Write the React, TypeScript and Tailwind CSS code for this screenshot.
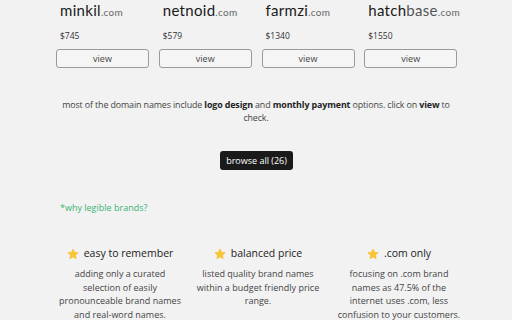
import React from "react";

const domains = [
  { name: "minkil", price: "$745" },
  { name: "netnoid", price: "$579" },
  { name: "farmzi", price: "$1340" },
  { name: "hatch", extra: "base", price: "$1550" },
];

const Star = () => (
  <svg width="12" height="12" viewBox="0 0 24 24" className="shrink-0">
    <path
      d="M12 1.8l3.1 6.6 7.2.9-5.3 5 1.4 7.1L12 17.9l-6.4 3.5 1.4-7.1-5.3-5 7.2-.9z"
      fill="#f8c630"
      stroke="#f2b61c"
      strokeWidth="1"
      strokeLinejoin="round"
    />
  </svg>
);

const features = [
  {
    title: "easy to remember",
    lines: ["adding only a curated", "selection of easily", "pronounceable brand names", "and real-word names."],
  },
  {
    title: "balanced price",
    lines: ["listed quality brand names", "within a budget friendly price", "range."],
  },
  {
    title: ".com only",
    lines: ["focusing on .com brand", "names as 47.5% of the", "internet uses .com, less", "confusion to your customers."],
  },
];

export default function App() {
  return (
    <div
      className="w-[512px] h-[320px] overflow-hidden bg-[#f2f2f2] text-[#333]"
      style={{ fontFamily: "'Open Sans', Lato, sans-serif" }}
    >
      <div className="ml-[56px] w-[401px] grid grid-cols-4 gap-x-[10px]">
        {domains.map((d) => (
          <div key={d.name} className="flex flex-col">
            <div
              className="pl-[4px] h-[22px] leading-[22px] text-[15px] text-[#1a1a1a] tracking-[0.3px] -mt-[1px]"
              style={{ fontFamily: "Lato, sans-serif" }}
            >
              {d.name}
              {d.extra && <span className="text-[#555]">{d.extra}</span>}
              <span className="text-[10px] text-[#666]">.com</span>
            </div>
            <div className="pl-[4px] mt-[8px] h-[14px] leading-[14px] text-[8.5px] text-[#333]">{d.price}</div>
            <button className="mt-[6px] h-[19px] w-[93px] border border-[#9a9a9a] rounded-[3px] bg-[#f5f5f5] text-[9px] text-[#444] leading-none">
              view
            </button>
          </div>
        ))}
      </div>

      <p className="mt-[30px] text-center text-[8.9px] tracking-[-0.12px] leading-[13px] text-[#444] whitespace-nowrap">
        most of the domain names include <b className="text-[#222]">logo design</b> and{" "}
        <b className="text-[#222]">monthly payment</b> options. click on <b className="text-[#222]">view</b> to
        <br />
        check.
      </p>

      <div className="mt-[27px] flex justify-center">
        <button className="h-[19px] px-[6px] rounded-[3px] bg-[#1a1a1a] text-white text-[9px] leading-none ml-[1px]">
          browse all (26)
        </button>
      </div>

      <div className="mt-[32px] ml-[60px] text-[9px] leading-[12px] text-[#3cb371]">*why legible brands?</div>

      <div className="mt-[32px] ml-[52px] grid grid-cols-[136px_140px_142px]">
        {features.map((f) => (
          <div key={f.title} className="flex flex-col items-center">
            <div className="flex items-center gap-[5px] h-[16px] text-[10.5px] text-[#222]">
              <Star />
              <span>{f.title}</span>
            </div>
            <p className="mt-[5px] text-center text-[9px] leading-[13.5px] text-[#444] whitespace-nowrap">
              {f.lines.map((l, i) => (
                <React.Fragment key={i}>
                  {l}
                  {i < f.lines.length - 1 && <br />}
                </React.Fragment>
              ))}
            </p>
          </div>
        ))}
      </div>
    </div>
  );
}
